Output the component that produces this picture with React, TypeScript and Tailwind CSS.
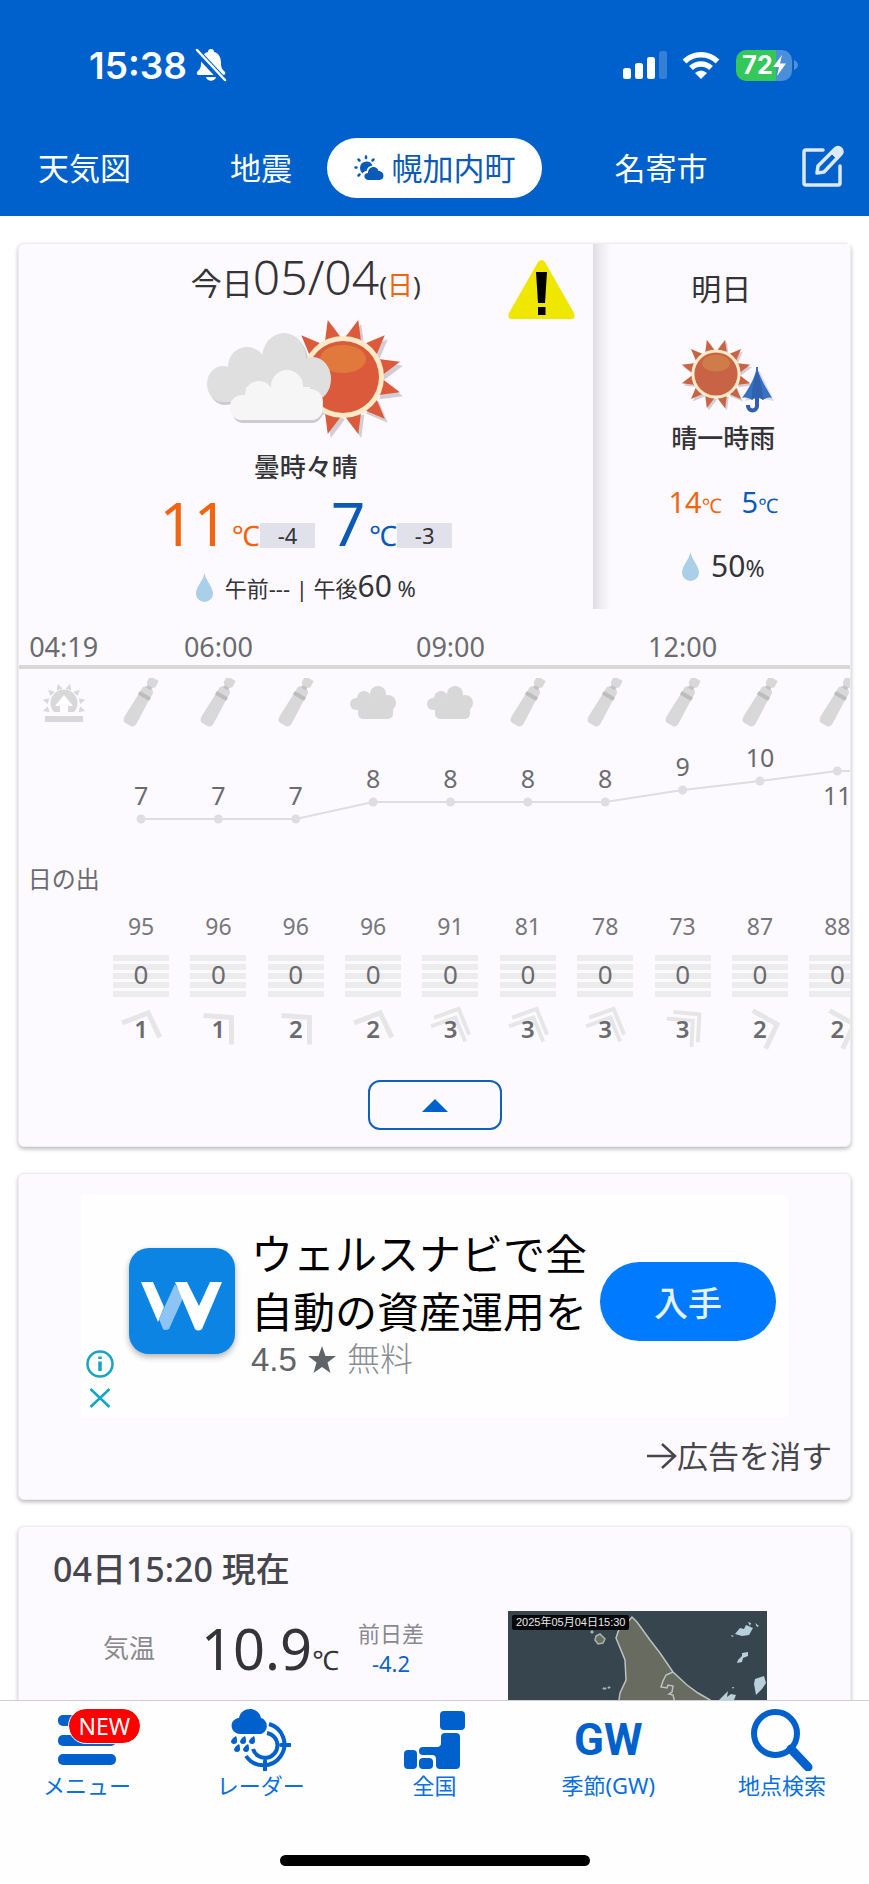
import React, { useState } from "react";

type Hour = {
	time?: string;
	icon: "bottle" | "cloud";
	temp: number;
	y: number;
	below?: boolean;
	humidity: number;
	rain: number;
	wind: number;
	angle: number;
};

const hours: Hour[] = [
	{ icon: "bottle", temp: 7, y: 82, humidity: 95, rain: 0, wind: 1, angle: -23 },
	{ time: "06:00", icon: "bottle", temp: 7, y: 82, humidity: 96, rain: 0, wind: 1, angle: 2 },
	{ icon: "bottle", temp: 7, y: 82, humidity: 96, rain: 0, wind: 2, angle: 2 },
	{ icon: "cloud", temp: 8, y: 65, humidity: 96, rain: 0, wind: 2, angle: -23 },
	{ time: "09:00", icon: "cloud", temp: 8, y: 65, humidity: 91, rain: 0, wind: 3, angle: -20 },
	{ icon: "bottle", temp: 8, y: 65, humidity: 81, rain: 0, wind: 3, angle: -20 },
	{ icon: "bottle", temp: 8, y: 65, humidity: 78, rain: 0, wind: 3, angle: -20 },
	{ time: "12:00", icon: "bottle", temp: 9, y: 53, humidity: 73, rain: 0, wind: 3, angle: 5 },
	{ icon: "bottle", temp: 10, y: 44, humidity: 87, rain: 0, wind: 2, angle: 27 },
	{ icon: "bottle", temp: 11, y: 34, below: true, humidity: 88, rain: 0, wind: 2, angle: 27 },
];

const spikes = Array.from({ length: 12 }, (_, i) => 15 + i * 30);

const Sun = ({ x, y, scale = 1, body = "#da5a3b", shine = "#e1793c" }: { x: number; y: number; scale?: number; body?: string; shine?: string }) => (
	<g transform={`translate(${x} ${y}) scale(${scale})`}>
		<g fill="#d3ccd2" transform="translate(3 4)">
			{spikes.map((a) => (
				<path key={a} d="M37 -9 L59 0 L37 9 Z" transform={`rotate(${a})`} />
			))}
		</g>
		<g fill={body}>
			{spikes.map((a) => (
				<path key={a} d="M37 -9 L59 0 L37 9 Z" transform={`rotate(${a})`} />
			))}
		</g>
		<circle r="41" fill="#ffe9c6" />
		<circle r="36" fill={body} />
		<ellipse cy="-18" rx="23" ry="14" fill={shine} />
	</g>
);

const CloudySunny = () => (
	<svg width="200" height="124" viewBox="0 0 200 124" aria-hidden="true">
		<Sun x={137} y={60} />
		<g fill="#cfcacf" transform="translate(2 3)">
			<ellipse cx="78" cy="41" rx="22" ry="25" />
			<ellipse cx="17" cy="67" rx="16" ry="18" />
			<rect x="24" y="80" width="91" height="23" rx="12" />
		</g>
		<g fill="#dfdfdf">
			<ellipse cx="78" cy="41" rx="22" ry="25" />
			<circle cx="41" cy="49" r="19" />
			<ellipse cx="17" cy="67" rx="16" ry="18" />
			<ellipse cx="107" cy="62" rx="18" ry="22" />
			<rect x="17" y="50" width="90" height="35" />
		</g>
		<g fill="#f6f6f6">
			<circle cx="81" cy="69" r="16" />
			<circle cx="53" cy="78" r="14" />
			<circle cx="36" cy="90" r="12" />
			<circle cx="104" cy="85" r="13" />
			<rect x="40" y="70" width="64" height="25" />
			<rect x="24" y="80" width="93" height="23" rx="12" />
		</g>
	</svg>
);

const SunnyRain = () => (
	<svg width="94" height="78" viewBox="0 0 94 78" aria-hidden="true">
		<Sun x={36} y={37} scale={0.6} body="#c96346" shine="#d07c49" />
		<g transform="translate(2 1)" fill="#dcd8e4">
			<path d="M77 32 L92 63 L77 60 L63 63 Z" />
		</g>
		<path d="M77 60 V69 a4.500 4.500 0 0 1 -9 0 V68" fill="none" stroke="#2f5fae" strokeWidth="4" />
		<path d="M76 30 h2 V34 C82 45 88 54 92 61 C88 60 86 61 83 63 C80 60 74 60 72 63 C69 61 66 60 62 61 C67 54 73 45 76 34 Z" fill="#3672c4" />
		<path d="M77 33 C80 43 83 54 83 63 C80 60 74 60 72 63 C71 54 74 43 77 33 Z" fill="#2f61ae" />
	</svg>
);

const Drop = () => (
	<svg className="inline-block" width="17" height="29" viewBox="0 0 17 29" aria-hidden="true">
		<path d="M8.500 0 C10 8 17 14 17 20.500 A8.500 8.500 0 0 1 0 20.500 C0 14 7 8 8.500 0 Z" fill="#aacfe8" />
	</svg>
);

const Bottle = () => (
	<svg width="36" height="50" viewBox="0 0 36 50" aria-label="水筒">
		<g transform="translate(18 24) rotate(30)" fill="#d8d8d8">
			<path d="M-6 -6 H6 L7 20 Q7 26 3 26 H-3 Q-7 26 -7 20 Z" />
			<path d="M-3 -17 H3 L6 -14 V-8 H-6 V-14 Z" />
			<rect x="-6.500" y="-9" width="13" height="4" rx="1" fill="#bdbdbd" />
			<rect x="-2.500" y="-19" width="5" height="4" fill="#c2c2c2" />
			<path d="M-4 -27 H4 Q5 -27 5 -24 V-20 L3 -18 H-3 L-5 -20 V-24 Q-5 -27 -4 -27 Z" />
		</g>
	</svg>
);

const GrayCloud = () => (
	<svg width="46" height="34" viewBox="0 0 46 34" aria-label="くもり">
		<g fill="#d8d8d8">
			<circle cx="6" cy="18" r="6" />
			<circle cx="14" cy="12" r="7" />
			<circle cx="28" cy="8" r="8" />
			<circle cx="38" cy="17" r="8" />
			<rect x="6" y="12" width="32" height="12" />
			<rect x="8" y="18" width="35" height="15" rx="5" />
		</g>
	</svg>
);

const Sunrise = () => (
	<svg width="44" height="40" viewBox="0 0 44 40" aria-label="日の出">
		<g fill="#d8d8d8">
			<path d="M12 29 A13.500 13.500 0 1 1 32 29 Z" />
			{[16, -14, -44, -74, -106, -136, -166, -196].map((a) => (
				<path key={a} d="M16 -3 L22 0 L16 3 Z" transform={`translate(22 22) rotate(${a})`} />
			))}
			<rect x="3" y="33" width="38" height="6" />
		</g>
		<path d="M22 12 L31 23 H26 V29 H18 V23 H13 Z" fill="#fff" />
	</svg>
);

const WindArrow = ({ angle, strong }: { angle: number; strong: boolean }) => (
	<svg className="absolute" width="50" height="46" viewBox="-25 -23 50 46" aria-hidden="true">
		<g fill="none" stroke="#e6e6e6" transform={`rotate(${angle})`}>
			{strong ? (
				<>
					<path d="M-11 -16 H15 L16 12" strokeWidth="4" />
					<path d="M-17 -9 H9 L10 17" strokeWidth="4" />
				</>
			) : (
				<path d="M-15 -13 L13 -12 L14 15" strokeWidth="5" />
			)}
		</g>
	</svg>
);

const StatusBar = () => (
	<div className="flex h-[130px] items-center justify-between pl-[89px] pr-[71px]">
		<div className="flex items-center gap-2 font-['Inter'] text-[37px] font-semibold leading-none">
			<span>15:38</span>
			<svg width="32" height="34" viewBox="0 0 32 34" aria-hidden="true">
				<path d="M16 1 C18 1 19 2 19 4 C24 5 26 10 26 15 C26 21 28 22 30 24 Q31 27 28 27 H4 Q1 27 2 24 C4 22 6 21 6 15 C6 10 8 5 13 4 C13 2 14 1 16 1 Z M11 29 H21 C20 34 12 34 11 29 Z" fill="#fff" />
				<path d="M1 3 L29 33" stroke="#0061cc" strokeWidth="7" />
				<path d="M2 2 L30 32" stroke="#fff" strokeWidth="2.500" strokeLinecap="round" />
			</svg>
		</div>
		<div className="flex items-center">
			<svg width="44" height="28" viewBox="0 0 44 28" fill="#fff" aria-hidden="true">
				<rect x="0" y="17" width="8" height="11" rx="2.500" />
				<rect x="12" y="12" width="8" height="16" rx="2.500" />
				<rect x="24" y="6" width="8" height="22" rx="2.500" />
				<rect x="36" y="0" width="8" height="28" rx="2.500" opacity=".2" />
			</svg>
			<svg className="ml-[15px]" width="38" height="28" viewBox="0 0 38 28" aria-hidden="true">
				<path d="M2.500 10.500 A23.500 23.500 0 0 1 35.500 10.500" fill="none" stroke="#fff" strokeWidth="5.500" />
				<path d="M9 17 A14.500 14.500 0 0 1 29 17" fill="none" stroke="#fff" strokeWidth="5.500" />
				<path d="M19 28 L13 22 Q19 17 25 22 Z" fill="#fff" />
			</svg>
			<div className="ml-4 flex h-[31px] w-[56px] items-center justify-center rounded-[10px] bg-[linear-gradient(90deg,#34c759_72%,#4b8fdb_72%)] font-['Inter'] text-[25px] font-bold leading-none">
				72
				<svg width="13" height="21" viewBox="0 0 13 21" aria-hidden="true">
					<path d="M9 0 L0 12 H6 L4 21 L13 8.500 H7 Z" fill="#fff" />
				</svg>
			</div>
			<svg className="ml-[2px]" width="4" height="10" viewBox="0 0 4 10" aria-hidden="true">
				<path d="M0 0 Q4 2 4 5 Q4 8 0 10 Z" fill="#4b8fdb" />
			</svg>
		</div>
	</div>
);

const Tabs = () => (
	<nav className="grid h-[76px] grid-cols-[195fr_132fr_215fr_238fr_89fr] items-center text-[31px] leading-none">
		<button className="pl-[38px] text-left">天気図</button>
		<button>地震</button>
		<button className="flex h-[60px] items-center justify-center gap-2 rounded-full bg-white text-[#0b5ab8]">
			<svg width="30" height="26" viewBox="0 0 30 26" fill="#0b5ab8" aria-hidden="true">
				<path d="M6 13 A6.500 6.500 0 0 1 18.500 10.500 C15 11 13 13 12.500 16 C10.500 16 9.500 17 8.500 18.500 A6.500 6.500 0 0 1 6 13 Z" />
				<path d="M15 25 C9 25 9 18 14 18 C14 11 23 10 24.500 16 C31 16 31 25 25.500 25 Z" />
				<g stroke="#0b5ab8" strokeWidth="2.500" strokeLinecap="round">
					<path d="M12 1.500 V3 M4.500 4.500 L5.500 5.500 M19.500 4.500 L18.500 5.500 M1.500 12.500 H2.500 M4.500 20.500 L5.500 19.500" />
				</g>
			</svg>
			幌加内町
		</button>
		<button>名寄市</button>
		<button className="flex justify-center pb-1 pr-1" aria-label="編集">
			<svg width="44" height="44" viewBox="0 0 44 44" fill="none" stroke="#dce9fa" strokeWidth="3.500" strokeLinecap="round" strokeLinejoin="round" aria-hidden="true">
				<path d="M22 6 H5 Q3 6 3 8 V39 Q3 41 5 41 H37 Q39 41 39 39 V22" />
				<path d="M16 29 L17 22 L34 5 Q37 2 40 5 Q42 8 40 10 L23 28 Z" />
				<path d="M30 9 L36 15 L41 9 Q42 6 39 4 Q36 3 35 4 Z" fill="#dce9fa" strokeWidth="1" />
			</svg>
		</button>
	</nav>
);

const Today = () => (
	<section className="relative flex-[575] text-center text-[#333338]">
		<p className="whitespace-nowrap text-[48px] font-light leading-[66px]">
			<span className="text-[31px] font-normal leading-none">今日</span>05/04
			<span className="text-[26px] font-normal leading-none">
				(<span className="text-[#f26410]">日</span>)
			</span>
		</p>
		<svg className="absolute right-[18px] top-4" width="67" height="59" viewBox="0 0 67 59" aria-label="注意報">
			<path d="M30 2 Q33.500 -2 37 2 L66 53 Q68 59 63 59 H4 Q-1 59 1 53 Z" fill="#f0e700" />
			<path d="M28 12 H39 L37 43 H30 Z M30 47 H37.500 V55 H30 Z" fill="#000" />
		</svg>
		<div className="mt-[7px] flex justify-center">
			<CloudySunny />
		</div>
		<p className="mt-3 text-[26px] font-medium leading-[28px]">曇時々晴</p>
		<div className="mt-[18px] flex h-[60px] items-end justify-center text-[60px] leading-[48px]">
			<div className="flex items-baseline text-[#f26410]">
				11<span className="ml-1 text-[28px]">℃</span>
			</div>
			<span className="mb-[11px] h-[25px] w-[55px] bg-[#e1e1ec] text-[22px] leading-[25px]">-4</span>
			<div className="ml-4 flex items-baseline text-[#0b5ab8]">
				7<span className="ml-1 text-[28px]">℃</span>
			</div>
			<span className="mb-[11px] h-[25px] w-[55px] bg-[#e1e1ec] text-[22px] leading-[25px]">-3</span>
		</div>
		<div className="mt-3 flex items-center justify-center gap-3">
			<Drop />
			<p className="text-[22px] leading-8">
				午前--- | 午後<span className="text-[30px] leading-none">60</span> %
			</p>
		</div>
	</section>
);

const Tomorrow = () => (
	<section className="flex-[258] bg-[linear-gradient(90deg,#dedde3_0,#ebe9ee_6px,#fcfaff_18px)] text-center text-[#333338]">
		<p className="pt-7 text-[30px] leading-[34px]">明日</p>
		<div className="mt-[31px] flex justify-center pl-3">
			<SunnyRain />
		</div>
		<p className="mt-[7px] pl-1 text-[26px] font-medium leading-[32px]">晴一時雨</p>
		<div className="mt-7 flex items-baseline justify-center gap-5 pl-1 text-[29px] leading-[40px]">
			<span className="text-[#f26410]">
				14<span className="text-[20px] leading-none">℃</span>
			</span>
			<span className="text-[#0b5ab8]">
				5<span className="text-[20px] leading-none">℃</span>
			</span>
		</div>
		<div className="mt-6 flex items-center justify-center gap-3 pl-1">
			<Drop />
			<p className="text-[30px] leading-[40px]">
				50<span className="text-[23px] leading-none">%</span>
			</p>
		</div>
	</section>
);

const COL = 851 / 11;

const Hourly = () => (
	<section className="overflow-hidden text-[#6b6b6f]">
		<div className="border-b-4 border-[#d8d8d8]">
			<div className="ml-[6px] grid h-14 w-[851px] grid-cols-11 pt-[21px] text-center text-[27px] leading-[34px]">
				<span>04:19</span>
				{hours.map((h, i) => (
					<span key={i}>{h.time}</span>
				))}
			</div>
		</div>
		<div className="ml-[6px] w-[851px]">
			<div className="grid h-[68px] grid-cols-11 place-items-center">
				<Sunrise />
				{hours.map((h, i) => (h.icon === "bottle" ? <Bottle key={i} /> : <GrayCloud key={i} />))}
			</div>
			<svg className="block" width="851" height="121" viewBox="0 0 851 121">
				<polyline
					points={hours.map((h, i) => `${COL * (i + 1.5)},${h.y}`).join(" ") + ` 851,34`}
					fill="none"
					stroke="#dedde0"
					strokeWidth="2"
				/>
				{hours.map((h, i) => (
					<g key={i}>
						<circle cx={COL * (i + 1.5)} cy={h.y} r="4.500" fill="#dedde0" />
						<text x={COL * (i + 1.5)} y={h.below ? h.y + 34 : h.y - 14} textAnchor="middle" fontSize="25" fill="#6b6b6f">
							{h.temp}
						</text>
					</g>
				))}
			</svg>
			<div className="grid h-[42px] grid-cols-11 place-items-center text-[24px] leading-none">
				<span className="whitespace-nowrap">日の出</span>
			</div>
			<div className="grid h-[52px] grid-cols-11 place-items-center text-[23px] leading-none text-[#77777b]">
				<span />
				{hours.map((h, i) => (
					<span key={i}>{h.humidity}</span>
				))}
			</div>
			<div className="grid h-[47px] grid-cols-11 place-items-center text-[26px] leading-[39px]">
				<span />
				{hours.map((h, i) => (
					<span key={i} className="h-[42px] w-14 bg-[repeating-linear-gradient(#ececec_0_6px,transparent_6px_9px)] text-center">
						{h.rain}
					</span>
				))}
			</div>
			<div className="grid h-[60px] grid-cols-11 text-[24px] font-semibold leading-none">
				<span />
				{hours.map((h, i) => (
					<span key={i} className="relative flex items-center justify-center">
						<WindArrow angle={h.angle} strong={h.wind > 2} />
						<span className="relative">{h.wind}</span>
					</span>
				))}
			</div>
		</div>
	</section>
);

const card = "rounded-[6px] border border-[#eeecf1] bg-[#fcfaff] shadow-[0_2px_4px_rgba(0,0,0,0.28)]";

const Ad = () => (
	<section className={card}>
		<div className="mx-[62px] mt-[21px] flex h-[222px] bg-[#fefeff]">
			<div className="flex w-12 flex-col gap-[9px] pb-2 pl-1 pt-[154px]">
				<button aria-label="広告について">
					<svg className="block" width="30" height="30" viewBox="0 0 30 30" aria-hidden="true">
						<circle cx="15" cy="15" r="12.500" fill="none" stroke="#14a5c3" strokeWidth="2.500" />
						<path d="M15 12.500 V22 M15 7.500 V10" stroke="#14a5c3" strokeWidth="3.500" />
					</svg>
				</button>
				<button aria-label="広告を閉じる">
					<svg className="block" width="30" height="20" viewBox="0 0 30 20" aria-hidden="true">
						<path d="M5.500 1 L24.500 19 M24.500 1 L5.500 19" stroke="#14a5c3" strokeWidth="2.500" />
					</svg>
				</button>
			</div>
			<div className="mt-[53px] h-[106px] w-[106px] shrink-0 rounded-[20px] bg-[#0b84e3] shadow-[0_3px_6px_rgba(0,0,0,0.3)]">
				<svg width="106" height="106" viewBox="0 0 106 106" aria-label="WealthNavi">
					<path d="M12 34 H24 L35 59 L29 74 Z" fill="#fff" />
					<path d="M46 36 L54 50 L40 81 Q36 83 34 81 L30 71 Z" fill="#8dc4f4" />
					<path d="M46 34 H58 L70 58 L81 34 H93 L73 81 Q69 84 66 81 Z" fill="#fff" />
				</svg>
			</div>
			<div className="ml-4 mt-[30px] flex-1 whitespace-nowrap">
				<p className="text-[42px] leading-[58px] text-black">
					ウェルスナビで全
					<br />
					自動の資産運用を
				</p>
				<p className="mt-[2px] flex items-center font-['Liberation_Sans','Noto_Sans_CJK_JP',sans-serif] text-[33px] leading-[34px] text-[#606368]">
					4.5
					<svg className="mx-[11px]" width="28" height="28" viewBox="0 0 28 28" aria-hidden="true">
						<path d="M14 0 L17.500 10 H28 L19.500 16.500 L22.500 27 L14 21 L5.500 27 L8.500 16.500 L0 10 H10.500 Z" fill="#606368" />
					</svg>
					<span className="font-light text-[#8a8d92]">無料</span>
				</p>
			</div>
			<button className="mr-3 mt-[67px] h-[79px] w-[176px] rounded-full bg-[#007aff] pt-1 text-[34px] font-medium text-[#e2f2ff]">入手</button>
		</div>
		<div className="flex h-[82px] items-center justify-end pb-1 pr-[18px] text-[31px] leading-none text-[#46464c]">
			<a href="#" className="flex items-center">
				<svg width="30" height="26" viewBox="0 0 30 26" fill="none" stroke="#46464c" strokeWidth="2.500" aria-hidden="true">
					<path d="M0 13 H27 M15 1 L28 13 L15 25" />
				</svg>
				広告を消す
			</a>
		</div>
	</section>
);

const RadarMap = () => (
	<div className="relative h-[259px] w-[259px] bg-[#36454e]">
		<svg width="259" height="259" viewBox="0 0 259 259" aria-label="雨雲レーダー">
			<path
				d="M90 259 L108 120 L111 89 L112 82 L118 69 L117 49 L108 27 L112 15 L119 12 L124 6 L129 11 L142 29 L152 42 L165 61 L179 74 L190 82 L202 89 L230 110 L259 120 V259 Z"
				fill="#676b60"
				stroke="#bdc2c1"
				strokeWidth="1.500"
			/>
			<path d="M165 61 L158 64 L155 70 L153 76 L159 77 L160 74 L165 75 L164 81 L161 83 L165 84 L167 92" fill="none" stroke="#bdc2c1" strokeWidth="1.500" />
			<path d="M88 25 L92 23 L97 28 L95 32 L90 33 L87 29 Z" fill="#676b60" stroke="#aab1b1" strokeWidth="1.500" />
			<path d="M83 20 h2 v2 h-2 z M95 77 h3 v1 h-3 z M100 76 h2 v1 h-2 z" fill="#aab1b1" stroke="#aab1b1" />
			<g fill="#b8d0d9">
				<path d="M227 23 L232 17 L236 18 L238 14 L245 17 L241 24 L234 25 Z M240 11 l3 1 -1 3 z M247 12 l4 3 -2 1 z M223 24 l3 1 -2 1 z" />
				<path d="M230 49 L234 45 L234 42 L240 41 L240 45 L235 47 L234 51 L229 52 Z" />
				<path d="M246 73 L247 68 L256 65 L258 72 L254 78 L248 84 Z" />
				<path d="M211 89 L217 83 L220 80 L219 86 L223 83 L228 84 L226 89 Z M224 76 l2 0 -1 2 z" />
			</g>
		</svg>
		<span className="absolute left-1 top-1 rounded-[2px] bg-[#050708] px-1 font-['Liberation_Sans','Noto_Sans_CJK_JP'] text-[11px] leading-[15px] text-[#e8e8e8]">2025年05月04日15:30</span>
	</div>
);

const Current = () => (
	<section className={card}>
		<h2 className="pl-[34px] pt-5 text-[34px] font-medium leading-[44px] text-[#46464e]">04日15:20 現在</h2>
		<div className="mt-5 flex items-start justify-between pl-[84px] pr-[83px]">
			<div className="flex h-[74px] items-center">
				<span className="text-[26px] text-[#8a898e]">気温</span>
				<p className="ml-[46px] text-[56px] leading-[74px] text-[#333338]">
					10.9<span className="text-[27px] leading-none">℃</span>
				</p>
				<div className="ml-[19px] text-center text-[22px] leading-[30px]">
					<p className="text-[#8a898e]">前日差</p>
					<p className="text-[#0b62c8]">-4.2</p>
				</div>
			</div>
			<RadarMap />
		</div>
	</section>
);

const MenuIcon = () => (
	<div className="relative h-[62px] w-[58px]">
		<svg width="58" height="62" viewBox="0 0 58 62" fill="#0061cc" aria-hidden="true">
			<rect x="0" y="6" width="58" height="11" rx="5" />
			<rect x="0" y="26" width="58" height="11" rx="5" />
			<rect x="0" y="45" width="58" height="11" rx="5" />
		</svg>
		<span className="absolute left-[11px] top-0 flex h-[34px] w-[71px] items-center justify-center rounded-full bg-[#ff0000] text-[23px] text-white outline-1 outline-white">NEW</span>
	</div>
);

const RadarIcon = () => (
	<svg width="60" height="62" viewBox="0 0 60 62" aria-hidden="true">
		<g fill="none" stroke="#0061cc" strokeWidth="4">
			<path d="M38 15 A21 21 0 1 1 15 47" />
			<path d="M36 24 A12.500 12.500 0 1 1 22 40" />
			<path d="M50 36 H59 M34 52 V61" strokeLinecap="round" />
		</g>
		<g fill="#0061cc">
			<path d="M9 25 C-2 24 -2 10 8 9 C10 -3 28 -3 30 9 C39 12 37 25 28 25 Z" />
			{[[3, 27], [12, 27], [21, 27], [6, 35], [15, 35]].map(([x, y]) => (
				<path key={x} d={`M${x + 2} ${y} Q${x + 3} ${y + 1} ${x + 3} ${y + 5} A3 3 0 0 1 ${x - 3} ${y + 5} Q${x - 2} ${y + 2} ${x + 2} ${y} Z`} />
			))}
		</g>
	</svg>
);

const JapanIcon = () => (
	<svg width="62" height="62" viewBox="0 0 62 62" fill="#0061cc" aria-hidden="true">
		<rect x="37" y="2" width="25" height="19" rx="4" />
		<path d="M42 24 H53 Q57 24 57 28 V56 Q57 60 53 60 H37 Q33 60 33 56 V50 Q33 46 29 46 H20 Q16 46 16 42 Q16 38 20 38 H34 Q38 38 38 34 V28 Q38 24 42 24 Z" />
		<rect x="1" y="41" width="13" height="19" rx="4" />
		<rect x="16" y="49" width="14" height="11" rx="4" />
	</svg>
);

const SearchIcon = () => (
	<svg width="62" height="62" viewBox="0 0 62 62" fill="none" stroke="#0061cc" aria-hidden="true">
		<circle cx="24.500" cy="24.500" r="21.500" strokeWidth="6" />
		<path d="M40 40 L57 58" strokeWidth="9" strokeLinecap="round" />
	</svg>
);

const footer = [
	{ label: "メニュー", icon: <MenuIcon /> },
	{ label: "レーダー", icon: <RadarIcon /> },
	{ label: "全国", icon: <JapanIcon /> },
	{
		label: "季節(GW)",
		icon: <span className="pt-1 font-['Roboto',sans-serif] text-[44px] font-bold leading-[54px] text-[#0061cc]">GW</span>,
	},
	{ label: "地点検索", icon: <SearchIcon /> },
];

const Footer = () => (
	<footer className="h-[184px] shrink-0 border-t border-[#d0ced4] bg-[#fefefe]">
		<nav className="grid grid-cols-5 pt-2">
			{footer.map((f) => (
				<a key={f.label} href="#" className="flex flex-col items-center text-[22px] leading-[28px] text-[#0a6fe0]">
					<span className="flex h-[62px] justify-center">{f.icon}</span>
					{f.label}
				</a>
			))}
		</nav>
		<div className="mx-auto mt-14 h-[11px] w-[310px] rounded-full bg-black" />
	</footer>
);

const App = () => {
	const [open, setOpen] = useState(true);

	return (
		<div className="flex h-screen flex-col bg-white font-['Noto_Sans','Noto_Sans_CJK_JP',sans-serif]">
			<header className="h-[216px] shrink-0 bg-[#0061cc] text-white">
				<StatusBar />
				<Tabs />
			</header>
			<main className="flex flex-1 flex-col gap-[26px] overflow-y-auto px-[18px] pt-[27px] [scrollbar-width:none] [&>*]:shrink-0">
				<section className={card}>
					<div className="flex h-[365px]">
						<Today />
						<Tomorrow />
					</div>
					{open && <Hourly />}
					<button
						aria-label="時間別の予報を開閉"
						onClick={() => setOpen(!open)}
						className="mx-auto mb-4 mt-[21px] flex h-[50px] w-[134px] items-center justify-center rounded-[12px] border-2 border-[#1260bd]"
					>
						<svg width="26" height="13" viewBox="0 0 26 13" aria-hidden="true">
							<path d="M0 13 L13 0 L26 13 Z" fill="#0061cc" />
						</svg>
					</button>
				</section>
				<Ad />
				<Current />
			</main>
			<Footer />
		</div>
	);
};

export default App;
